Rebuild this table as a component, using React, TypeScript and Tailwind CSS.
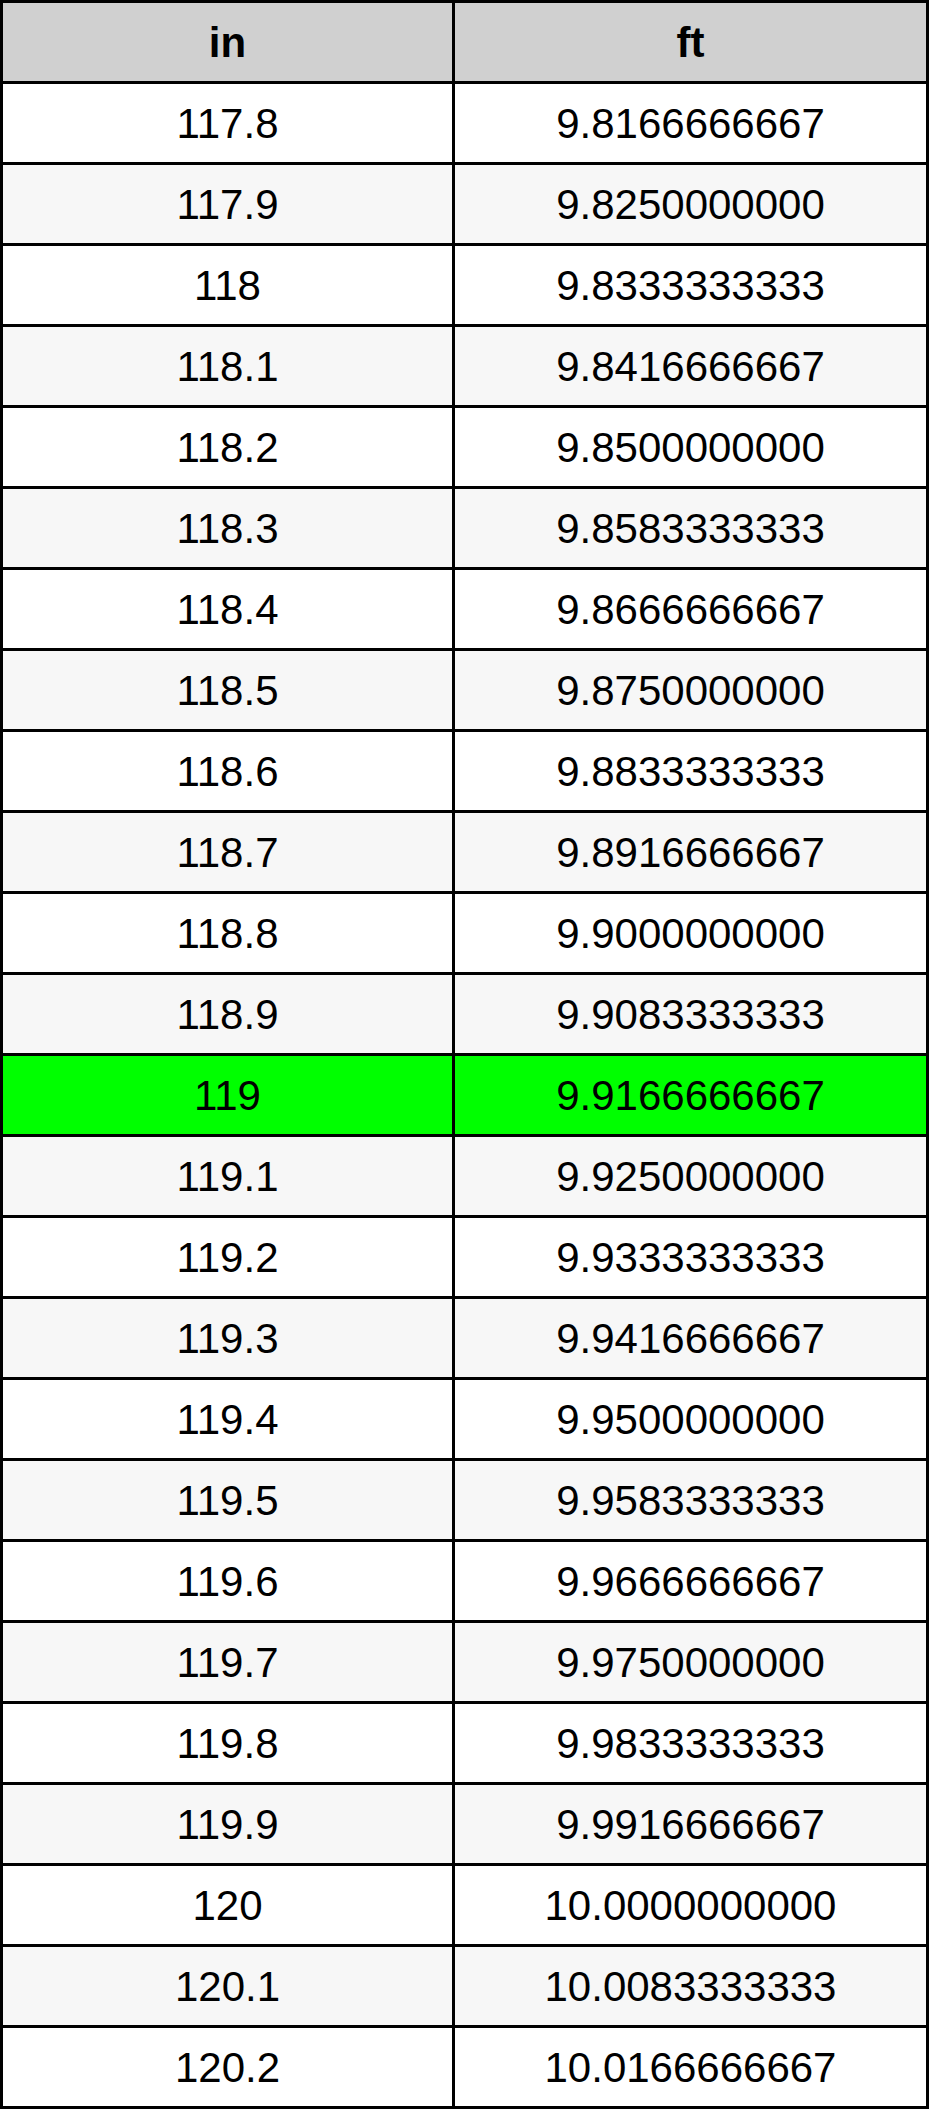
const rows: [string, string][] = [
  ["117.8", "9.8166666667"],
  ["117.9", "9.8250000000"],
  ["118", "9.8333333333"],
  ["118.1", "9.8416666667"],
  ["118.2", "9.8500000000"],
  ["118.3", "9.8583333333"],
  ["118.4", "9.8666666667"],
  ["118.5", "9.8750000000"],
  ["118.6", "9.8833333333"],
  ["118.7", "9.8916666667"],
  ["118.8", "9.9000000000"],
  ["118.9", "9.9083333333"],
  ["119", "9.9166666667"],
  ["119.1", "9.9250000000"],
  ["119.2", "9.9333333333"],
  ["119.3", "9.9416666667"],
  ["119.4", "9.9500000000"],
  ["119.5", "9.9583333333"],
  ["119.6", "9.9666666667"],
  ["119.7", "9.9750000000"],
  ["119.8", "9.9833333333"],
  ["119.9", "9.9916666667"],
  ["120", "10.0000000000"],
  ["120.1", "10.0083333333"],
  ["120.2", "10.0166666667"],
];

const HIGHLIGHT = "119";

export default function App() {
  return (
    <div
      className="w-[930px] bg-white text-black"
      style={{ fontFamily: '"Liberation Sans", Arial, sans-serif' }}
    >
      <div className="grid w-[929px] grid-cols-[449px_471px] gap-[3px] bg-black p-[3px] text-[42px]">
        {/* header */}
        <div className="flex h-[78px] items-center justify-center bg-[#d0d0d0] font-bold">
          in
        </div>
        <div className="flex h-[78px] items-center justify-center bg-[#d0d0d0] font-bold">
          ft
        </div>

        {rows.map(([inches, feet], index) => {
          const bg =
            inches === HIGHLIGHT
              ? "bg-[#00ff00]"
              : index % 2 === 1
                ? "bg-[#f7f7f7]"
                : "bg-white";

          return (
            <div key={inches} className="contents">
              <div className={`flex h-[78px] items-center justify-center ${bg}`}>
                {inches}
              </div>
              <div className={`flex h-[78px] items-center justify-center ${bg}`}>
                {feet}
              </div>
            </div>
          );
        })}
      </div>
    </div>
  );
}
